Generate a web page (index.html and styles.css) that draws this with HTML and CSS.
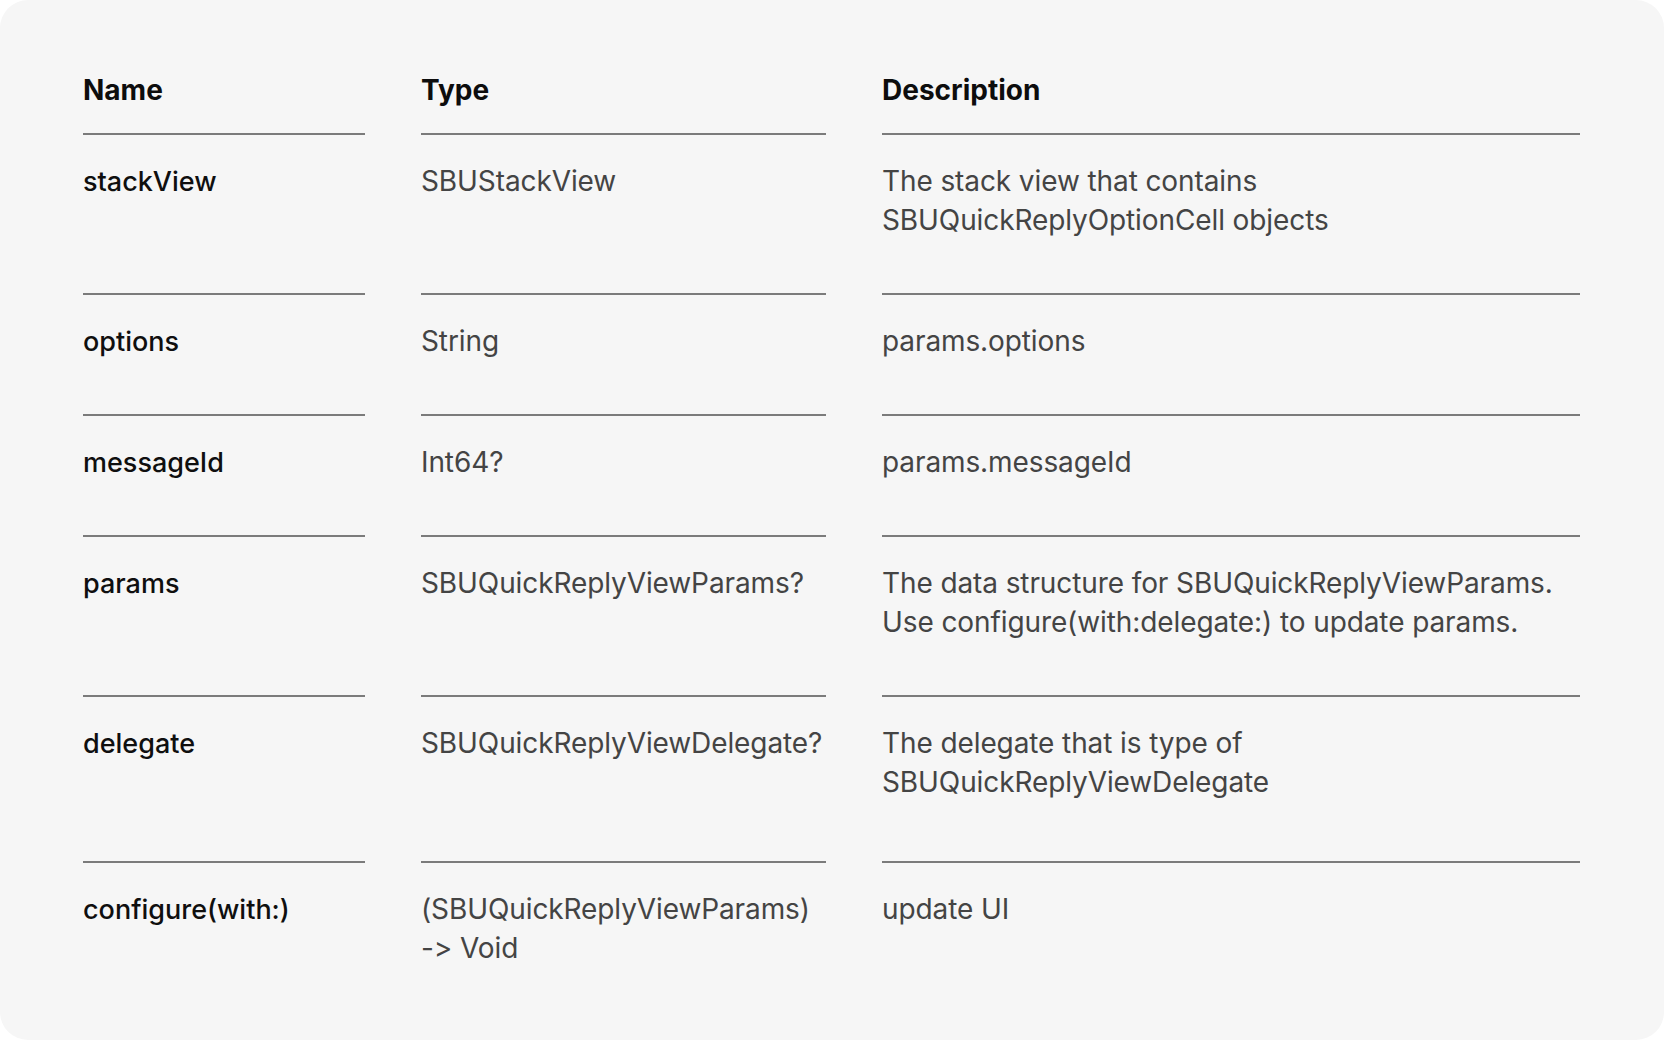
FILE: index.html
```html
<!DOCTYPE html>
<html lang="en">
<head>
<meta charset="utf-8">
<title>SBUQuickReplyView properties</title>
<link rel="stylesheet" href="styles.css">
</head>
<body>
<div class="card">
  <div class="row head">
    <div class="cell">Name</div>
    <div class="cell">Type</div>
    <div class="cell">Description</div>
  </div>
  <div class="row">
    <div class="cell name">stackView</div>
    <div class="cell">SBUStackView</div>
    <div class="cell">The stack view that contains<br>SBUQuickReplyOptionCell objects</div>
  </div>
  <div class="row">
    <div class="cell name">options</div>
    <div class="cell">String</div>
    <div class="cell">params.options</div>
  </div>
  <div class="row">
    <div class="cell name">messageId</div>
    <div class="cell">Int64?</div>
    <div class="cell">params.messageId</div>
  </div>
  <div class="row">
    <div class="cell name">params</div>
    <div class="cell">SBUQuickReplyViewParams?</div>
    <div class="cell">The data structure for SBUQuickReplyViewParams.<br>Use configure(with:delegate:) to update params.</div>
  </div>
  <div class="row tall">
    <div class="cell name">delegate</div>
    <div class="cell">SBUQuickReplyViewDelegate?</div>
    <div class="cell">The delegate that is type of<br>SBUQuickReplyViewDelegate</div>
  </div>
  <div class="row last">
    <div class="cell name">configure(with:)</div>
    <div class="cell">(SBUQuickReplyViewParams)<br>-&gt; Void</div>
    <div class="cell">update UI</div>
  </div>
</div>
</body>
</html>
```
FILE: styles.css
```css
html, body {
  margin: 0;
  padding: 0;
  background: #ffffff;
}

body {
  font-family: Inter, "Noto Sans", "Liberation Sans", sans-serif;
  font-feature-settings: "calt" 0, "liga" 0;
  font-variant-ligatures: none;
}

.card {
  box-sizing: border-box;
  height: 1040px;
  background: #f6f6f6;
  border-radius: 28px;
  padding: 71px 84px 0 83px;
}

.row {
  display: grid;
  grid-template-columns: 282px 405px 1fr;
  column-gap: 56px;
}

.cell {
  font-size: 28px;
  line-height: 39px;
  color: #444444;
  letter-spacing: -0.1px;
  padding: 27px 0 53px;
  border-bottom: 2px solid #7b7b7b;
  white-space: nowrap;
}

.head .cell {
  font-size: 28px;
  font-weight: 700;
  color: #0d0d0d;
  letter-spacing: 0;
  padding: 0 0 23px;
}

.cell.name {
  font-size: 27px;
  color: #0f0f0f;
  font-weight: 500;
  letter-spacing: 0;
}

.tall .cell {
  padding-bottom: 59px;
}

.last .cell {
  border-bottom: none;
}
```
